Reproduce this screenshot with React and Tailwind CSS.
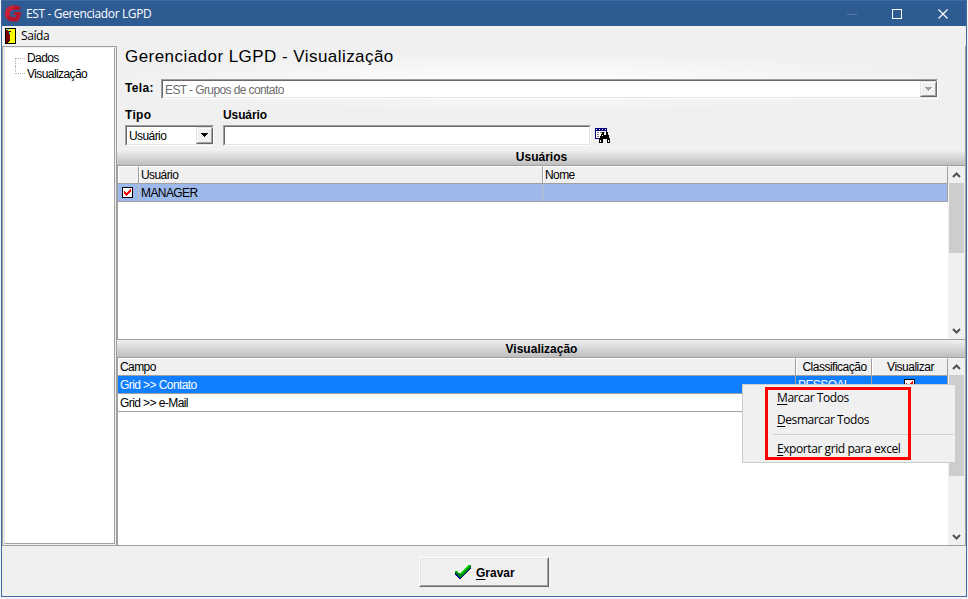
import clsx from "clsx";

const TREE = ["Dados", "Visualização"];
const FIELDS = [
  { name: "Grid >> Contato", level: "PESSOAL", visible: true, selected: true },
  { name: "Grid >> e-Mail", level: "", visible: false, selected: false },
];

export default function App() {
  return (
    <div className="h-[599px] w-[968px] overflow-hidden bg-[#f3f3f3] pr-px pb-[2px] pl-px font-['Liberation_Sans',Arial,sans-serif] text-[12px] leading-[14px] text-black">
      <div className="relative flex h-[597px] flex-col border-x border-b border-[#3f6aa5] bg-[#f0f0f0]">
        <TitleBar />
        <div className="flex h-5 shrink-0 items-center pl-[3px] font-['Open_Sans','Noto_Sans',sans-serif]">
          <DoorIcon />
          <span className="ml-[5px] text-[12px] tracking-[-0.4px]">Saída</span>
        </div>

        <div className="flex h-[500px] shrink-0 border-b border-[#a0a0a0]">
          <Tree />
          <main className="flex min-w-0 flex-1 flex-col border-r border-[#a0a0a0]">
            <Filters />
            <Caption>Usuários</Caption>
            <UsersGrid />
            <Caption topLine>Visualização</Caption>
            <FieldsGrid />
          </main>
        </div>

        <footer className="flex flex-1 pt-[11px] pl-[417px]">
          <button className="flex h-[30px] w-[130px] items-center border border-t-white border-r-[#696969] border-b-[#696969] border-l-white font-bold">
            <span className="flex h-full w-full items-center border border-t-[#e3e3e3] border-r-[#a0a0a0] border-b-[#a0a0a0] border-l-[#e3e3e3] pl-[34px]">
              <GreenCheck />
              <span className="mt-px ml-1 text-[12px]">
                <span className="underline underline-offset-2">G</span>ravar
              </span>
            </span>
          </button>
        </footer>

        <ContextMenu />
      </div>
    </div>
  );
}

function TitleBar() {
  return (
    <header className="flex h-[26px] shrink-0 items-center border-t border-[#3f6aa5] bg-[#2f5b93] pl-[3px] font-['Open_Sans','Noto_Sans',sans-serif] text-[12px] text-white">
      <svg width="17" height="17" viewBox="0 0 17 17">
        <path d="M16 2.500 L14 5 H7.500 Q5 5.500 5 8.500 Q5 12 7.500 12 H10.500 L11.500 10 H8 L9.500 7 H16.500 L14.500 14 L12 16.500 H6 Q0 15 0 8.500 Q0.500 1 7.500 0.500 H12 Z" fill="#b5162f" />
        <path d="M7.500 0.500 Q0.500 1 0 8.500 Q0 11 1.500 13 L5 9 Q5 5.500 7.500 5 L10 0.500 Z" fill="#c8223b" />
      </svg>
      <span className="ml-1 tracking-[-0.36px]">EST - Gerenciador LGPD</span>
      <svg className="mr-[15px] ml-auto" width="104" height="12" viewBox="0 0 104 12" fill="none">
        <path d="M0 6.500H10" stroke="#587cab" />
        <rect x="45.5" y="1.5" width="9" height="9" stroke="#fff" />
        <path d="M91.5 1.5l9 9M100.500 1.500l-9 9" stroke="#fff" strokeWidth="1.2" />
      </svg>
    </header>
  );
}

function Tree() {
  return (
    <aside className="flex w-[115px] shrink-0 border-t border-r border-l border-[#a0a0a0]">
      <div className="mt-px mb-px ml-px w-[111px] border-r border-b border-l border-[#a0a0a0] border-l-[#e3e3e3] bg-white pt-[2px] pl-[10px]">
        <ul>
          {TREE.map((item, i) => (
            <li key={item} className="flex h-4">
              <span className={clsx("w-[10px] border-l border-dotted border-[#b5b5b5]", i === 0 ? "mt-2 h-2 border-t" : "h-2 border-b")} />
              <span className="ml-[2px] pt-px tracking-[-0.58px]">{item}</span>
            </li>
          ))}
        </ul>
      </div>
    </aside>
  );
}

function Filters() {
  return (
    <section className="flex h-[104px] shrink-0 flex-col bg-[radial-gradient(ellipse_430px_30px_at_410px_36px,#ffffff_0%,#f8f8f8_45%,#f0f0f0_100%)] pl-2">
      <h1 className="h-[33px] text-[17px] leading-[21px] tracking-[0.45px]">Gerenciador LGPD - Visualização</h1>
      <div className="flex h-5">
        <b className="w-9 pt-[2px] tracking-[0.35px]">Tela:</b>
        <Sunken className="w-[777px]">
          <span className="flex-1 pt-[2px] pl-[2px] tracking-[-0.6px] text-[#6d6d6d]">EST - Grupos de contato</span>
          <DropButton disabled />
        </Sunken>
      </div>
      <div className="flex pt-[9px]">
        <b className="w-[98px] tracking-[0.3px]">Tipo</b>
        <b className="tracking-[-0.1px]">Usuário</b>
      </div>
      <div className="mt-[3px] flex h-[21px]">
        <Sunken className="w-[89px]">
          <span className="flex-1 pt-[2px] pl-[2px] tracking-[-0.58px]">Usuário</span>
          <DropButton />
        </Sunken>
        <Sunken className="ml-[9px] w-[368px]" />
        <CalendarSearchIcon />
      </div>
    </section>
  );
}

function Sunken({ className, children }) {
  return (
    <div className={clsx("border border-t-[#a0a0a0] border-r-white border-b-white border-l-[#a0a0a0]", className)}>
      <div className="flex h-full border border-t-[#696969] border-r-[#e3e3e3] border-b-[#e3e3e3] border-l-[#696969] bg-white">{children}</div>
    </div>
  );
}

function DropButton({ disabled }) {
  return (
    <span className="-mr-px flex w-[17px] border border-t-[#e3e3e3] border-r-[#696969] border-b-[#696969] border-l-[#e3e3e3] bg-[#f0f0f0]">
      <span className="flex flex-1 items-center justify-center border border-t-white border-r-[#a0a0a0] border-b-[#a0a0a0] border-l-white">
        <svg width="8" height="5" viewBox="0 0 8 5" shapeRendering="crispEdges">
          {disabled && <path d="M1 1h7v1h-1v1h-1v1h-1v1h-1v-1h-1v-1h-1v-1h-1z" fill="#fff" />}
          <path d="M0 0h7v1h-1v1h-1v1h-1v1h-1v-1h-1v-1h-1v-1h-1z" fill={disabled ? "#a0a0a0" : "#000"} />
        </svg>
      </span>
    </span>
  );
}

function Caption({ children, topLine }) {
  return (
    <div className={clsx("shrink-0 border-b border-[#a0a0a0] bg-linear-to-b from-[#f0f0f0] to-[#bebebe] pl-px text-center font-bold", topLine ? "h-[19px] border-t leading-[18px]" : "h-4 leading-[14px]")}>
      {children}
    </div>
  );
}

function UsersGrid() {
  return (
    <div className="flex h-[173px] shrink-0 border-l border-[#a0a0a0] bg-white">
      <div className="w-[830px] tracking-[-0.58px]">
        <div className="flex h-[18px] border-b border-[#a0a0a0] bg-[#f0f0f0] leading-[17px]">
          <HeadCell className="w-[21px]" />
          <HeadCell className="w-[404px]">Usuário</HeadCell>
          <HeadCell className="flex-1">Nome</HeadCell>
        </div>
        <div className="flex h-[18px] border-b border-[#a0a0a0] bg-[#9db9eb] leading-[19px]">
          <span className="flex w-[21px] items-center border-r border-[#c0c0c0] pl-1">
            <RedCheckBox />
          </span>
          <span className="w-[404px] border-r border-[#c0c0c0] pl-[2px]">MANAGER</span>
          <span className="flex-1 border-r border-[#a0a0a0]" />
        </div>
      </div>
      <ScrollBar thumb="h-[70px]" />
    </div>
  );
}

function FieldsGrid() {
  return (
    <div className="flex h-[187px] shrink-0 border-l border-[#a0a0a0] bg-white">
      <div className="w-[830px] tracking-[-0.58px]">
        <div className="flex h-[18px] border-b border-[#a0a0a0] bg-[#f0f0f0] leading-[17px]">
          <HeadCell className="flex-1">Campo</HeadCell>
          <HeadCell className="w-[76px] text-center tracking-[-0.5px]">Classificação</HeadCell>
          <HeadCell className="w-[76px] text-center tracking-[-0.5px]">Visualizar</HeadCell>
        </div>
        {FIELDS.map((f) => (
          <div key={f.name} className={clsx("flex h-[18px] border-b border-[#a0a0a0] leading-[19px]", f.selected && "bg-[#117dff] text-white")}>
            <span className="flex-1 border-r border-[#a0a0a0] pl-[2px]">{f.name}</span>
            <span className="w-[76px] border-r border-[#a0a0a0] pl-[2px]">{f.level}</span>
            <span className="flex w-[76px] items-center justify-center border-r border-[#a0a0a0]">{f.visible && <RedCheckBox />}</span>
          </div>
        ))}
      </div>
      <ScrollBar thumb="h-[101px]" />
    </div>
  );
}

function HeadCell({ className, children }) {
  return <span className={clsx("border-t border-r border-t-white border-r-[#a0a0a0] pl-[2px] shadow-[inset_1px_0_#fff]", className)}>{children}</span>;
}

function ScrollBar({ thumb }) {
  return (
    <div className="flex w-[17px] flex-col items-center bg-[#f0f0f0]">
      <svg className="shrink-0" width="15" height="17" viewBox="0 0 15 17" fill="none">
        <path d="M4 11L7.500 7.500L11 11" stroke="#505050" strokeWidth="2" />
      </svg>
      <div className={clsx("w-[15px] bg-[#cdcdcd]", thumb)} />
      <svg className="mt-auto" width="15" height="17" viewBox="0 0 15 17" fill="none">
        <path d="M4 7L7.500 10.500L11 7" stroke="#505050" strokeWidth="2" />
      </svg>
    </div>
  );
}

function ContextMenu() {
  return (
    <div className="absolute top-[384px] left-[740px] h-[79px] w-[214px] border border-[#cccccc] bg-[#f0f0f0] font-['Open_Sans','Noto_Sans',sans-serif] text-[12px] tracking-[-0.42px]">
      <MenuItem hot="M" rest="arcar Todos" />
      <MenuItem hot="D" rest="esmarcar Todos" />
      <div className="mt-[5px] mr-px mb-px ml-[30px] border-t border-[#d0d0d0]" />
      <MenuItem hot="E" rest="xportar grid para excel" />
      {/* highlight frame around the entries */}
      <div className="absolute top-[2px] left-[22px] h-[73px] w-[146px] border-[3px] border-[#ff0000]" />
    </div>
  );
}

function MenuItem({ hot, rest }) {
  return (
    <div className="h-[22px] pl-[34px] leading-[26px]">
      <span className="underline underline-offset-2">{hot}</span>
      {rest}
    </div>
  );
}

function RedCheckBox() {
  return (
    <svg width="11" height="11" viewBox="0 0 11 11" fill="none" shapeRendering="crispEdges">
      <rect x="0.5" y="0.5" width="10" height="10" fill="#fff" stroke="#000" />
      <path d="M2 4h1v1h1v1h1v-1h1v-1h1v-1h1v-1h1v3h-1v1h-1v1h-1v1h-1v1h-1v-1h-1v-1h-1z" fill="#f00" />
    </svg>
  );
}

function DoorIcon() {
  return (
    <svg width="11" height="16" viewBox="0 0 11 16" shapeRendering="crispEdges">
      <rect width="11" height="16" fill="#000" />
      <rect x="1" y="1" width="9" height="14" fill="#ff0" />
      <path d="M1 2h2v1h2v10h-2v1h-1v1h-1z" fill="#800000" />
      <path d="M5 3h1v1h-1zM5 12h-1v1h-1v1h-1v1h1v-1h1v-1h1z" fill="#000" />
      <path d="M2 1h2v1h-2zM4 4h1v2h-1z" fill="#0ff" />
    </svg>
  );
}

function CalendarSearchIcon() {
  return (
    <svg className="mt-[3px] ml-1" width="16" height="16" viewBox="0 0 16 16" shapeRendering="crispEdges">
      <path d="M0 0h12v11h-12z" fill="#000080" />
      <path d="M1 3h10v7h-10zM1 1h1v1h-1zM4 1h1v1h-1zM7 1h1v1h-1zM10 1h1v1h-1z" fill="#fff" />
      <path d="M2 4h2v1h-2zM5 4h2v1h-2zM8 4h2v1h-2zM2 6h2v1h-2zM2 8h2v1h-2z" fill="#808080" />
      <path d="M7 4h2v3h2v-3h2v3h1v3h1v5h-3v-4h-4v4h-4v-5h1v-2h1v-2h1z" fill="#000" />
      <path d="M5 12h1v2h-1zM13 12h1v2h-1zM7 7h1v1h-1z" fill="#fff" />
    </svg>
  );
}

function GreenCheck() {
  return (
    <svg width="17" height="16" viewBox="0 0 17 16" shapeRendering="crispEdges">
      <path d="M0 8h3v2h2v-1l9-8h2v3l-3 3-3 3-4 5h-2l-4-4z" fill="#000080" />
      <path d="M0 7h3v2h2l8-7 1-1h2v2l-3 3-3 3-4 5h-1l-4-4z" fill="#008a10" />
      <path d="M0 7h3v1h-3zM4 10h1v-1l8-7v-1h2v1h-1l-8 8z" fill="#00e000" />
    </svg>
  );
}
